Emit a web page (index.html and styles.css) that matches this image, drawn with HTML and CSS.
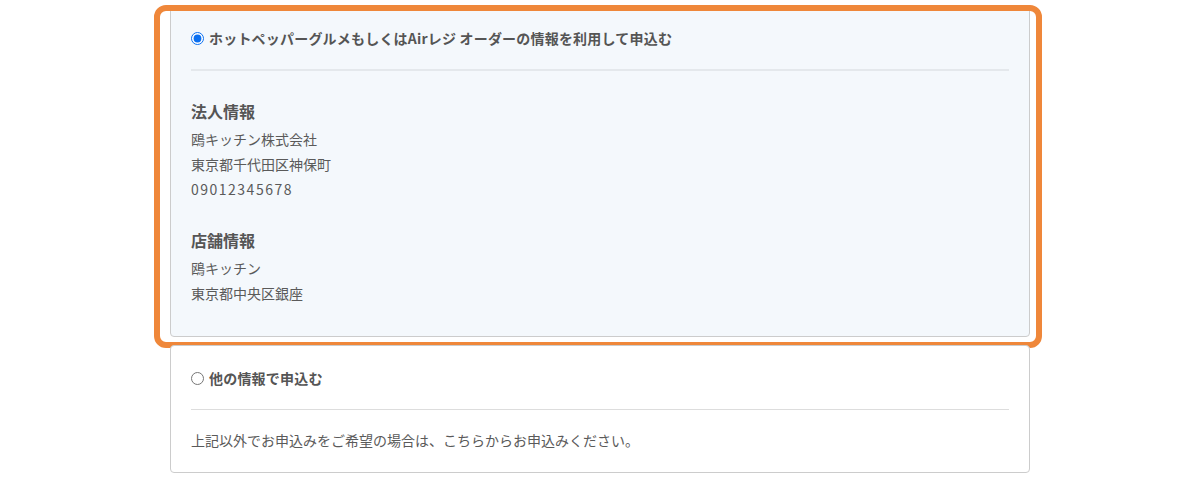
FILE: index.html
```html
<!DOCTYPE html>
<html lang="ja">
<head>
<meta charset="utf-8">
<title>申込情報の選択</title>
<link rel="stylesheet" href="styles.css">
</head>
<body>
<div class="wrap">
  <div class="card card--selected">
    <div class="highlight" aria-hidden="true"></div>
    <label class="option">
      <input type="radio" name="src" checked>
      <span class="option__label">ホットペッパーグルメもしくはAirレジ オーダーの情報を利用して申込む</span>
    </label>
    <div class="divider divider--soft"></div>
    <section class="info">
      <h3 class="info__title">法人情報</h3>
      <p class="info__line">鴎キッチン株式会社</p>
      <p class="info__line">東京都千代田区神保町</p>
      <p class="info__line info__num">09012345678</p>
    </section>
    <section class="info">
      <h3 class="info__title">店舗情報</h3>
      <p class="info__line">鴎キッチン</p>
      <p class="info__line">東京都中央区銀座</p>
    </section>
  </div>
  <div class="card">
    <label class="option">
      <input type="radio" name="src">
      <span class="option__label">他の情報で申込む</span>
    </label>
    <div class="divider"></div>
    <p class="note">上記以外でお申込みをご希望の場合は、こちらからお申込みください。</p>
  </div>
</div>
</body>
</html>
```

FILE: styles.css
```css
* { box-sizing: border-box; }
html, body {
  margin: 0;
  padding: 0;
  background: #ffffff;
}
body {
  font-family: "Noto Sans CJK JP", "Noto Sans", sans-serif;
  color: #555555;
}
.wrap {
  width: 860px;
  margin: 0 auto;
  padding-top: 5px;
  display: flex;
  flex-direction: column;
  gap: 8px;
}
.card {
  position: relative;
  border: 1px solid #cccccc;
  border-radius: 4px;
  background: #ffffff;
  padding: 22px 20px 19px;
}
.card--selected {
  background: #f4f8fc;
  padding-bottom: 30px;
}
.highlight {
  position: absolute;
  top: -1px;
  left: -17px;
  right: -13px;
  bottom: -12px;
  border: 6px solid #ef873a;
  border-radius: 12px;
  pointer-events: none;
}
.option {
  display: flex;
  align-items: center;
  gap: 5px;
  height: 21px;
  margin-bottom: 20px;
}
.option input {
  margin: 0;
  width: 13px;
  height: 13px;
  accent-color: #0a6ff0;
}
.option__label {
  font-size: 14px;
  font-weight: 700;
  line-height: 21px;
  letter-spacing: 0.2px;
  color: #555555;
}
.divider {
  height: 1px;
  background: #dddddd;
}
.divider--soft {
  height: 2px;
  background: #e4e8ec;
}
.info {
  margin-top: 28px;
}
.info + .info {
  margin-top: 26px;
}
.info__title {
  margin: 0 0 4px;
  font-size: 16px;
  line-height: 24px;
  font-weight: 700;
  color: #555555;
}
.info__line {
  margin: 0;
  font-size: 14px;
  line-height: 25px;
  color: #5a5a5a;
}
.info__num {
  letter-spacing: 1.5px;
}
.note {
  margin: 18px 0 0;
  font-size: 14px;
  line-height: 25px;
  color: #5a5a5a;
}
```
